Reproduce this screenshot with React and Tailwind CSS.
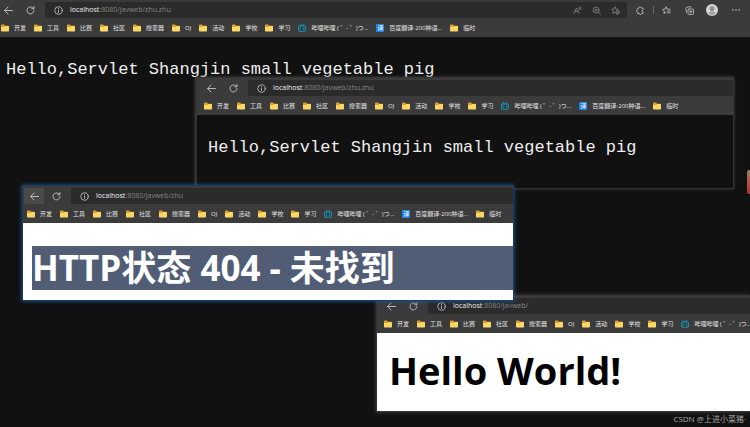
import React from "react";

const FOLDERS = ["开发", "工具", "比赛", "社区", "搜索器", "OJ", "活动", "学校", "学习"];

function Folder() {
  return (
    <svg viewBox="0 0 16 16" className="size-2 shrink-0" aria-hidden="true">
      <path d="M0 2.500Q0 1 1.500 1H6l2 2.500h6.500Q16 3.500 16 5v2H0z" fill="#dfa02c" />
      <path d="M0 6h6.500L8.500 4H14.500Q16 4 16 5.500V13.500Q16 15 14.500 15H1.500Q0 15 0 13.500z" fill="#fbd766" />
    </svg>
  );
}

function Bilibili() {
  return (
    <svg viewBox="0 0 16 16" className="size-2 shrink-0" fill="none" stroke="#1296bd" strokeWidth="2.2" strokeLinecap="round" aria-hidden="true">
      <rect x="1.200" y="4" width="13.600" height="10.500" rx="2.500" />
      <path d="M4.500 1l2 2.500M11.500 1l-2 2.500M5 8.500v1.500M11 8.500v1.500" />
    </svg>
  );
}

function Bookmark({ icon, children }) {
  return (
    <a href="#" className="flex shrink-0 items-center gap-[5px] text-[6px] leading-2 whitespace-nowrap text-[#e4e4e4]">
      {icon}
      <span>{children}</span>
    </a>
  );
}

function Bookmarks({ compact }) {
  return (
    <nav aria-label="Bookmarks" className="flex h-[19px] items-center gap-2 pl-px">
      {FOLDERS.map((name) => (
        <Bookmark key={name} icon={<Folder />}>{name}</Bookmark>
      ))}
      <Bookmark icon={<Bilibili />}>哔哩哔哩 ( ゜- ゜)つ...</Bookmark>
      {!compact && (
        <>
          <Bookmark
            icon={<span className="grid size-2 shrink-0 place-items-center bg-[#2080ea] text-[6px] leading-2 text-white">译</span>}
          >
            百度翻译-200种语...
          </Bookmark>
          <Bookmark icon={<Folder />}>临时</Bookmark>
        </>
      )}
    </nav>
  );
}

function Icon({ children }) {
  return (
    <svg viewBox="0 0 18 18" className="size-[9px]" fill="none" stroke="currentColor" strokeWidth="1.6" strokeLinecap="round" strokeLinejoin="round" aria-hidden="true">
      {children}
    </svg>
  );
}

const STAR = "M8 2l2 4.300 4.800.6-3.500 3.300";
const STAR_LEFT = "M8 2L6 6.300l-4.800.6 3.500 3.300-.9 4.800L8 12.700";

function AddressTools() {
  return (
    <>
      <button aria-label="Read aloud" className="text-[#858585]">
        <Icon>
          <path d="M2 15L7 4l5 11M4 11h6M11.500 3q1.500 1.500 1 4M14 1q2.500 2.500 1.500 6.500" />
        </Icon>
      </button>
      <button aria-label="Zoom" className="text-[#858585]">
        <Icon>
          <circle cx="8" cy="8" r="6" />
          <path d="M12.500 12.500L17 17M5.500 8h5M8 5.500v5" />
        </Icon>
      </button>
      <button aria-label="Add to favorites" className="text-[#858585]">
        <Icon>
          <path d={STAR_LEFT} />
          <path d={STAR} />
          <circle cx="13" cy="13" r="3.500" fill="currentColor" />
          <path d="M13 11.500v3M11.500 13h3" stroke="#2b2b2b" />
        </Icon>
      </button>
    </>
  );
}

function BrowserTools() {
  return (
    <div className="flex shrink-0 items-center pr-[10px] pl-[9px] text-[#c4c4c4]">
      <button aria-label="Extensions">
        <Icon>
          <path d="M14 6V4h-3.500a2.300 2.300 0 0 0-4.500 0L3.500 4.500V7a2.300 2.300 0 0 0 0 5v3H7a2 2 0 0 0 4 0h3v-3a2 2 0 0 1 0-4" />
        </Icon>
      </button>
      <span className="mr-2 ml-2 h-2 w-px bg-[#666]" />
      <button aria-label="Favorites">
        <Icon>
          <path d={STAR_LEFT} />
          <path d="M8 2l2 4.300h6M11 10h5.500M11 13.500h5.500" />
        </Icon>
      </button>
      <button aria-label="Collections" className="ml-[14px]">
        <Icon>
          <rect x="6" y="6" width="11" height="11" rx="2" />
          <path d="M11.500 9v5M9 11.500h5M3.500 13L1.500 5q0-1.500 1.500-2l7-2q1.500 0 2 2" />
        </Icon>
      </button>
      <button aria-label="Profile" className="ml-3">
        <svg viewBox="0 0 24 24" className="size-3" aria-hidden="true">
          <circle cx="12" cy="12" r="12" fill="#d6d6d6" />
          <circle cx="12" cy="9" r="5" fill="#909090" />
          <path d="M5 19q1-5 7-5t7 5q-3 3-7 3t-7-3z" fill="#a4a4a4" />
        </svg>
      </button>
      <button aria-label="Settings and more" className="ml-[14px]">
        <svg viewBox="0 0 16 16" className="size-2" fill="currentColor" aria-hidden="true">
          <circle cx="2" cy="8" r="1.600" />
          <circle cx="8" cy="8" r="1.600" />
          <circle cx="14" cy="8" r="1.600" />
        </svg>
      </button>
    </div>
  );
}

function Chrome({ path, inset = "", active = false, full = false, compact = false }) {
  return (
    <header className="bg-[#3b3b3b] pt-[2px]">
      <div className={`flex h-4 items-center ${inset}`}>
        <button
          aria-label="Back"
          className={`-ml-[2px] grid h-4 w-5 shrink-0 place-items-center rounded-xs text-[#d6d6d6] ${active ? "bg-[#4a4a4b]" : ""}`}
        >
          <Icon>
            <path d="M17 9H1.500M8 2L1.500 9l6.500 7" />
          </Icon>
        </button>
        <button aria-label="Refresh" className="ml-[7px] grid h-4 w-[11px] shrink-0 place-items-center text-[#d0d0d0]">
          <Icon>
            <path d="M16 9a7 7 0 1 1-2.500-5.500L15.500 5M16 1v4.500h-4.500" />
          </Icon>
        </button>
        <div className={`ml-[9px] flex h-4 min-w-0 grow items-center rounded-l-xs bg-[#2b2b2b] pl-[9px] ${full ? "gap-[10px] rounded-r-xs pr-[7px]" : ""}`}>
          <label className="flex min-w-0 grow items-center text-[7px] leading-[10px] text-[#858585]">
            <span className="mr-[7px] text-[#c8c8c8]">
              <Icon>
                <circle cx="9" cy="9" r="7.500" />
                <path d="M9 8v5M9 5v.2" />
              </Icon>
            </span>
            <span className="text-[#f0f0f0]">localhost</span>
            <input aria-label="Address" defaultValue={path} className="min-w-0 grow bg-transparent outline-none" />
          </label>
          {full && <AddressTools />}
        </div>
        {full && <BrowserTools />}
      </div>
      <div className={inset}>
        <Bookmarks compact={compact} />
      </div>
    </header>
  );
}

function ServletMessage() {
  return (
    <p className="font-['Liberation_Mono',monospace] text-[17px] leading-6 whitespace-nowrap text-[#eeeeee]">
      Hello,Servlet Shangjin small vegetable pig
    </p>
  );
}

export default function App() {
  return (
    <div className="relative min-h-screen w-full overflow-hidden bg-[#111111] font-['Open_Sans','Noto_Sans_CJK_SC',sans-serif]">
      <section>
        <Chrome path=":8080/javweb/zhu.zhu" full />
        <main className="px-[6px] pt-[21px]">
          <ServletMessage />
        </main>
      </section>

      <section className="absolute top-[77px] left-[195px] w-[539px] border border-l-2 border-[#343434] bg-[#111111] shadow-[0_0_3px_#444]">
        <Chrome path=":8080/javweb/zhu.zhu" inset="pl-[6px]" />
        <div className="px-[11px] pt-[21px] pb-7">
          <ServletMessage />
        </div>
      </section>

      <section className="absolute top-[295px] right-0 left-[376px] border border-r-0 border-[#343434] bg-white shadow-[0_0_4px_#444]">
        <Chrome path=":8080/javweb/" inset="pl-[6px]" compact />
        <div className="px-3 pt-3 pb-4">
          <h1 className="text-[38px] leading-[50px] font-bold whitespace-nowrap text-black">Hello World!</h1>
        </div>
      </section>

      <section className="absolute top-[185px] left-[22px] w-[492px] border border-[#173d66] bg-white shadow-[0_0_4px_#205a96]">
        <Chrome path=":8080/javweb/zhu" inset="pl-[3px]" active />
        <div className="pt-[23px] pb-[10px] pl-[9px]">
          <h1 className="h-11 bg-[#515c75] text-[35px] leading-11 font-bold whitespace-nowrap text-white">
            HTTP状态 404 - 未找到
          </h1>
        </div>
      </section>

      <div className="absolute top-[170px] right-0 h-6 w-[3px] rounded-l-xs bg-linear-to-b from-[#a07860] to-[#a5382a]" />
      <footer className="absolute right-1 bottom-[2px] text-[8px] leading-3 text-[#a8a8a8]">CSDN @上进小菜猪·</footer>
    </div>
  );
}
